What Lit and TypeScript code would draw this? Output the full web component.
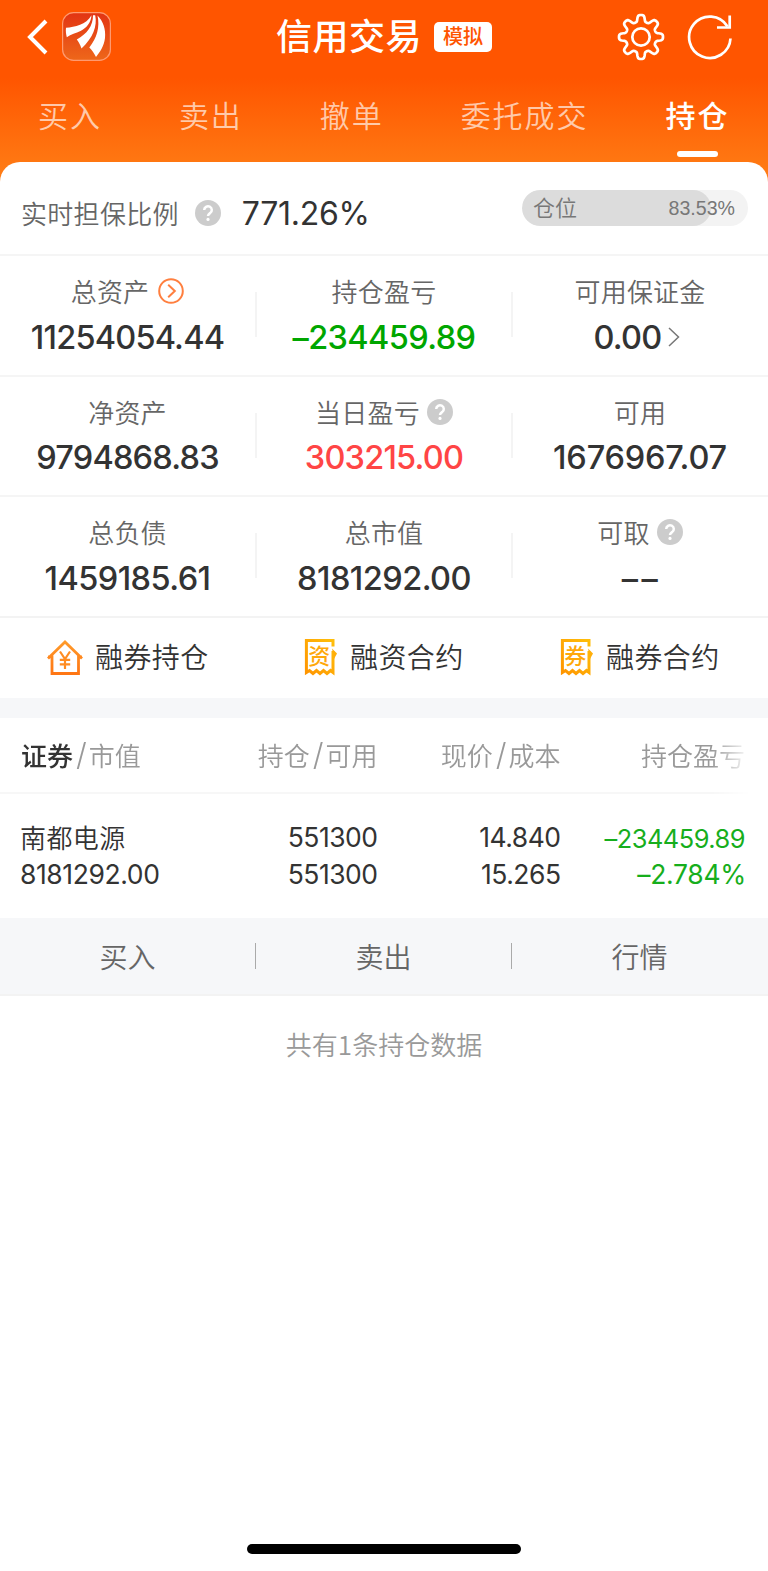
import { LitElement, html, css } from "lit";
import { customElement, property } from "lit/decorators.js";

const CJK = css`"Noto Sans CJK SC", sans-serif`;

function gearPath(cx: number, cy: number): string {
  const pts: string[] = [];
  for (let i = 0; i < 360; i += 1.5) {
    const t = (i * Math.PI) / 180;
    const r = 18.7 + (3.3 * Math.tanh(1.9 * Math.cos(8 * t))) / Math.tanh(1.9);
    pts.push(`${(cx + r * Math.cos(t)).toFixed(2)} ${(cy + r * Math.sin(t)).toFixed(2)}`);
  }
  return "M" + pts.join("L") + "Z";
}

const help = html`<svg class="ic" width="26" height="26" viewBox="0 0 26 26">
  <circle cx="13" cy="13" r="13" fill="#ccc" />
  <path d="M9.200 10a3.800 3.700 0 1 1 6 3c-1.400 1-2.200 1.500-2.200 3" fill="none" stroke="#fff" stroke-width="2.500" />
  <circle cx="13" cy="19.400" r="1.600" fill="#fff" />
</svg>`;

const circleArrow = html`<svg class="ic" width="26" height="26" viewBox="0 0 26 26">
  <circle cx="13" cy="13" r="11.800" fill="none" stroke="#ff7f3f" stroke-width="2" />
  <path d="M10.200 6.800L16.800 13L10.200 19.200" fill="none" stroke="#ff7f3f" stroke-width="2" />
</svg>`;

@customElement("metric-cell")
class MetricCell extends LitElement {
  @property() label = "";
  @property() value = "";
  @property() tone = "";
  @property() icon = "";
  @property({ type: Boolean }) link = false;
  static styles = css`
    :host { display: flex; flex-direction: column; align-items: center; padding-top: 15px; color: #333; }
    svg { flex: none; }
    .label { display: flex; align-items: center; height: 40px; font: 350 26px/40px ${CJK}; letter-spacing: 0.2px; color: #666; }
    .ic { margin: 0 0 0 9px; display: block; }
    .help .ic { margin-left: 7px; }
    .value { display: flex; align-items: center; height: 50px; margin-top: 1.5px; font: 500 32.5px/50px Inter, sans-serif; letter-spacing: -0.8px; white-space: nowrap; }
    .up { color: #ff4545; }
    .down { color: #00a600; letter-spacing: -0.6px; }
    .none { letter-spacing: 3.5px; margin-right: -3px; }
    .loose { letter-spacing: -0.55px; }
    .looser { letter-spacing: -0.2px; }
    .chev { margin: -2px 6px 0 7px; }
  `;
  render() {
    return html`
      <div class="label ${this.icon}">${this.label}${this.icon === "help" ? help : this.icon === "go" ? circleArrow : ""}</div>
      <div class="value ${this.tone}">${this.value}${this.link
        ? html`<svg class="chev" width="12" height="20" viewBox="0 0 12 20"><path d="M1 1L10.500 10L1 19" fill="none" stroke="#777" stroke-width="1.500" /></svg>`
        : ""}</div>`;
  }
}

@customElement("app-root")
class AppRoot extends LitElement {
  static styles = css`
    :host { display: flex; flex-direction: column; height: 1571px; background: #fff; font-family: ${CJK}; color: #333; overflow: hidden; }
    * { box-sizing: border-box; }
    svg { display: block; flex: none; }
    .top { height: 182px; flex: none; background: linear-gradient(#ff5500 0, #ff5500 78px, #ff7f16 182px); color: #fff; }
    .nav { height: 74px; display: grid; grid-template-columns: 1fr auto 1fr; align-items: center; }
    .left { display: flex; align-items: center; padding-left: 27px; gap: 14px; margin-top: -1px; }
    .mid { display: flex; align-items: center; gap: 12px; }
    .right { display: flex; align-items: center; justify-content: flex-end; gap: 22px; padding-right: 35.5px; margin-top: -1px; }
    .title { font: 500 36px/50px ${CJK}; letter-spacing: 0.5px; margin-top: -6px; }
    .badge { width: 58px; height: 30px; border-radius: 5px; background: #fff; color: #ff5500; font: 500 20px/28px ${CJK}; text-align: center; margin-top: -1px; }
    .tabs { display: flex; justify-content: space-between; padding: 0 38.5px 0 38px; height: 84px; }
    .tab { display: flex; flex-direction: column; align-items: center; font: 350 30px/80px ${CJK}; letter-spacing: 2px; color: rgba(255, 255, 255, 0.66); }
    .tab.on { color: #fff; font-weight: 500; }
    .tab.on::after { content: ""; width: 41px; height: 6px; border-radius: 3px; background: #fff; margin-top: -3px; }
    .card { margin-top: -20px; flex: 1; background: #fff; border-radius: 20px 20px 0 0; display: flex; flex-direction: column; }
    .ratio { height: 92px; flex: none; display: flex; align-items: center; padding: 10px 20px 0 21px; }
    .rl { font: 350 26px/40px ${CJK}; letter-spacing: 0.3px; color: #666; margin: -1px 16px 0 0; }
    .rv { font: 400 32px/40px Inter, sans-serif; letter-spacing: -0.3px; margin: 1px 0 0 21px; flex: 1; }
    .pill { width: 226px; height: 36px; margin-top: -10px; border-radius: 18px; background: #f3f3f3; display: grid; overflow: hidden; }
    .fill { grid-area: 1 / 1; background: #dcdcdc; border-radius: 18px; }
    .pt { grid-area: 1 / 1; display: flex; justify-content: space-between; align-items: flex-start; padding: 0 13px 0 11px; color: #777; font: 350 22px/32px ${CJK}; }
    .pn { font: 19.6px/36px "Liberation Sans", sans-serif; }
    .row { height: 120.6px; flex: none; display: grid; grid-template-columns: repeat(3, 1fr); border-top: 2px solid #f5f5f5; }
    .cell { display: flex; align-items: flex-start; }
    .cell metric-cell { flex: 1; margin-right: 1px; }
    .cell + .cell::before { content: ""; width: 2px; height: 45px; margin: 36px 0 0 -1px; background: #f4f4f4; }
    .links { height: 82px; flex: none; display: grid; grid-template-columns: repeat(3, 1fr); border-top: 2px solid #f3f3f3; }
    .link { display: flex; align-items: center; padding-left: 47px; font: 350 28px/77px ${CJK}; letter-spacing: 0.4px; gap: 12px; height: 78px; }
    .band { height: 20.5px; flex: none; background: #f6f7f9; }
    .thead, .body { display: grid; grid-template-columns: 160px 217.5px 183px 184.5px; }
    .thead { height: 75.5px; flex: none; font: 350 26px/73px ${CJK}; color: #999; text-align: right; border-bottom: 2px solid #f7f7f7; -webkit-mask-image: linear-gradient(90deg, #000 712px, transparent 750px); mask-image: linear-gradient(90deg, #000 712px, transparent 750px); }
    .first { text-align: left; padding-left: 21px; white-space: nowrap; }
    .body .first { padding-left: 20px; letter-spacing: -0.4px; }
    .first b { font-weight: 500; color: #333; }
    .sl { font: 300 31px/40px Inter, sans-serif; margin: 0 2px 0 3px; }
    .body { height: 124px; flex: none; padding-top: 25px; text-align: right; font: 400 26.5px/37px Inter, ${CJK}; letter-spacing: -0.5px; }
    .body .name { font: 350 26px/35px ${CJK}; height: 37px; letter-spacing: 0.4px; }
    .green { color: #16ae1c; }
    .sum { font-size: 25.4px; line-height: 39px; height: 37px; }
    .pct { letter-spacing: -0.3px; margin-right: -1px; }
    .acts { height: 78px; flex: none; background: #f6f7f9; border-bottom: 2px solid #f3f3f3; display: grid; grid-template-columns: repeat(3, 1fr); align-items: center; color: #666; font: 350 28px/77px ${CJK}; text-align: center; }
    .act { display: grid; grid-template-columns: 1fr 1px; align-items: center; }
    .act:not(:last-child)::after { content: ""; height: 26px; background: #aaa; }
    .note { text-align: center; font: 350 26px/40px ${CJK}; color: #999; margin-top: 28px; flex: 1; }
    .home { width: 274px; height: 10px; border-radius: 5px; background: #000; align-self: center; margin-bottom: 17px; }
    .glyph { font-family: ${CJK}; font-size: 22px; font-weight: 500; }
  `;

  receipt(ch: string, id: string) {
    return html`<svg width="35" height="38" viewBox="0 0 35 38">
      <defs><linearGradient id=${id} x1="0" y1="1" x2="1" y2="0"><stop offset="0" stop-color="#ff9500" /><stop offset="1" stop-color="#ffbe0a" /></linearGradient></defs>
      <path d="M30 8.500V2.500H3.400V34.500L6.500 32.500L10 35.500L13.500 32.500L17 35.500L20.500 32.500L24 35.500L27.500 32.500L30 34.500V13" fill="none" stroke="url(#${id})" stroke-width="3" />
      <path d="M29 10.500L34 15.500L31 21" fill="#ffaf0a" />
      <text class="glyph" x="16.500" y="25.500" text-anchor="middle" fill="#ffa80a">${ch}</text>
    </svg>`;
  }

  render() {
    const tabs = ["买入", "卖出", "撤单", "委托成交", "持仓"];
    return html`
      <div class="top">
        <div class="nav">
          <div class="left">
            <svg width="21" height="36" viewBox="0 0 21 36"><path d="M19 2L3 18L19 34" fill="none" stroke="#fff" stroke-width="4" /></svg>
            <svg width="49" height="49" viewBox="0 0 49 49">
              <defs><linearGradient id="lg" x1="0" y1="0" x2="0" y2="1"><stop offset="0" stop-color="#e23413" /><stop offset="1" stop-color="#ee671a" /></linearGradient></defs>
              <rect x="0.600" y="0.600" width="47.800" height="47.800" rx="11" fill="url(#lg)" stroke="#ff9a70" stroke-width="1.200" />
              <g fill="#fff">
                <path d="M29.500 3.300C29 11 24.500 16 18.500 19C14 21 9 22.500 4.800 25.200C4 22 3.600 19 4 15.800C13 15 24 13 29.500 3.300Z" />
                <path d="M31 3.300L33.200 3.300C35.500 14 31 26 19.500 36.500C18 32 16.500 30 14.800 27.500C25 22 31 14 31 3.300Z" />
                <path d="M35.500 3.500C41 9 44 17 43 26C42 34 38 40 34 45C32 41 30 38 27.300 35.500C35 26 38 15 35.500 3.500Z" />
              </g>
            </svg>
          </div>
          <div class="mid"><span class="title">信用交易</span><span class="badge">模拟</span></div>
          <div class="right">
            <svg width="48" height="48" viewBox="0 0 48 48" fill="none" stroke="#fff" stroke-width="2.700"><path d=${gearPath(24, 24)} /><circle cx="24" cy="24" r="8.700" /></svg>
            <svg width="46" height="48" viewBox="0 0 46 48" fill="none" stroke="#fff" stroke-width="2.700"><path d="M43.500 25.500A20.700 20.700 0 1 1 40.500 13.500" /><path d="M42.700 2.500V14.500H30" /></svg>
          </div>
        </div>
        <div class="tabs">${tabs.map((t) => html`<div class="tab ${t === "持仓" ? "on" : ""}">${t}</div>`)}</div>
      </div>
      <div class="card">
        <div class="ratio">
          <span class="rl">实时担保比例</span>${help}<span class="rv">771.26%</span>
          <div class="pill"><div class="fill" style="width:83.53%"></div><div class="pt"><span>仓位</span><span class="pn">83.53%</span></div></div>
        </div>
        <div class="row">
          <div class="cell"><metric-cell label="总资产" value="11254054.44" icon="go"></metric-cell></div>
          <div class="cell"><metric-cell label="持仓盈亏" value="–234459.89" tone="down"></metric-cell></div>
          <div class="cell"><metric-cell label="可用保证金" value="0.00" link></metric-cell></div>
        </div>
        <div class="row">
          <div class="cell"><metric-cell label="净资产" value="9794868.83"></metric-cell></div>
          <div class="cell"><metric-cell label="当日盈亏" value="303215.00" tone="up" icon="help"></metric-cell></div>
          <div class="cell"><metric-cell label="可用" value="1676967.07" tone="looser"></metric-cell></div>
        </div>
        <div class="row">
          <div class="cell"><metric-cell label="总负债" value="1459185.61" tone="loose"></metric-cell></div>
          <div class="cell"><metric-cell label="总市值" value="8181292.00" tone="loose"></metric-cell></div>
          <div class="cell"><metric-cell label="可取" value="––" tone="none" icon="help"></metric-cell></div>
        </div>
        <div class="links">
          <div class="link">
            <svg width="36" height="38" viewBox="0 0 36 38">
              <defs><linearGradient id="hg" x1="0" y1="0" x2="0" y2="1"><stop offset="0" stop-color="#ff9a2a" /><stop offset="1" stop-color="#ff7614" /></linearGradient></defs>
              <path d="M1 20.500L18 4L35 20.500M1 18.800H5V35.500H31.500V18.800H35" fill="none" stroke="url(#hg)" stroke-width="2.800" />
              <path d="M13 13.500L18 21L23 13.500M18 21V31M12.800 21.800H23.200M12.800 26.300H23.200" fill="none" stroke="#ff8c22" stroke-width="2.200" />
            </svg>融券持仓
          </div>
          <div class="link">${this.receipt("资", "ra")}融资合约</div>
          <div class="link">${this.receipt("券", "rb")}融券合约</div>
        </div>
        <div class="band"></div>
        <div class="thead">
          <span class="first"><b>证券</b><span class="sl">/</span>市值</span><span>持仓<span class="sl">/</span>可用</span><span>现价<span class="sl">/</span>成本</span><span>持仓盈亏</span>
        </div>
        <div class="body">
          <span class="first"><div class="name">南都电源</div>8181292.00</span>
          <span>551300<br />551300</span><span>14.840<br />15.265</span>
          <span class="green"><div class="sum">–234459.89</div><div class="pct">–2.784%</div></span>
        </div>
        <div class="acts"><div class="act">买入</div><div class="act">卖出</div><div class="act">行情</div></div>
        <div class="note">共有1条持仓数据</div>
        <div class="home"></div>
      </div>`;
  }
}
